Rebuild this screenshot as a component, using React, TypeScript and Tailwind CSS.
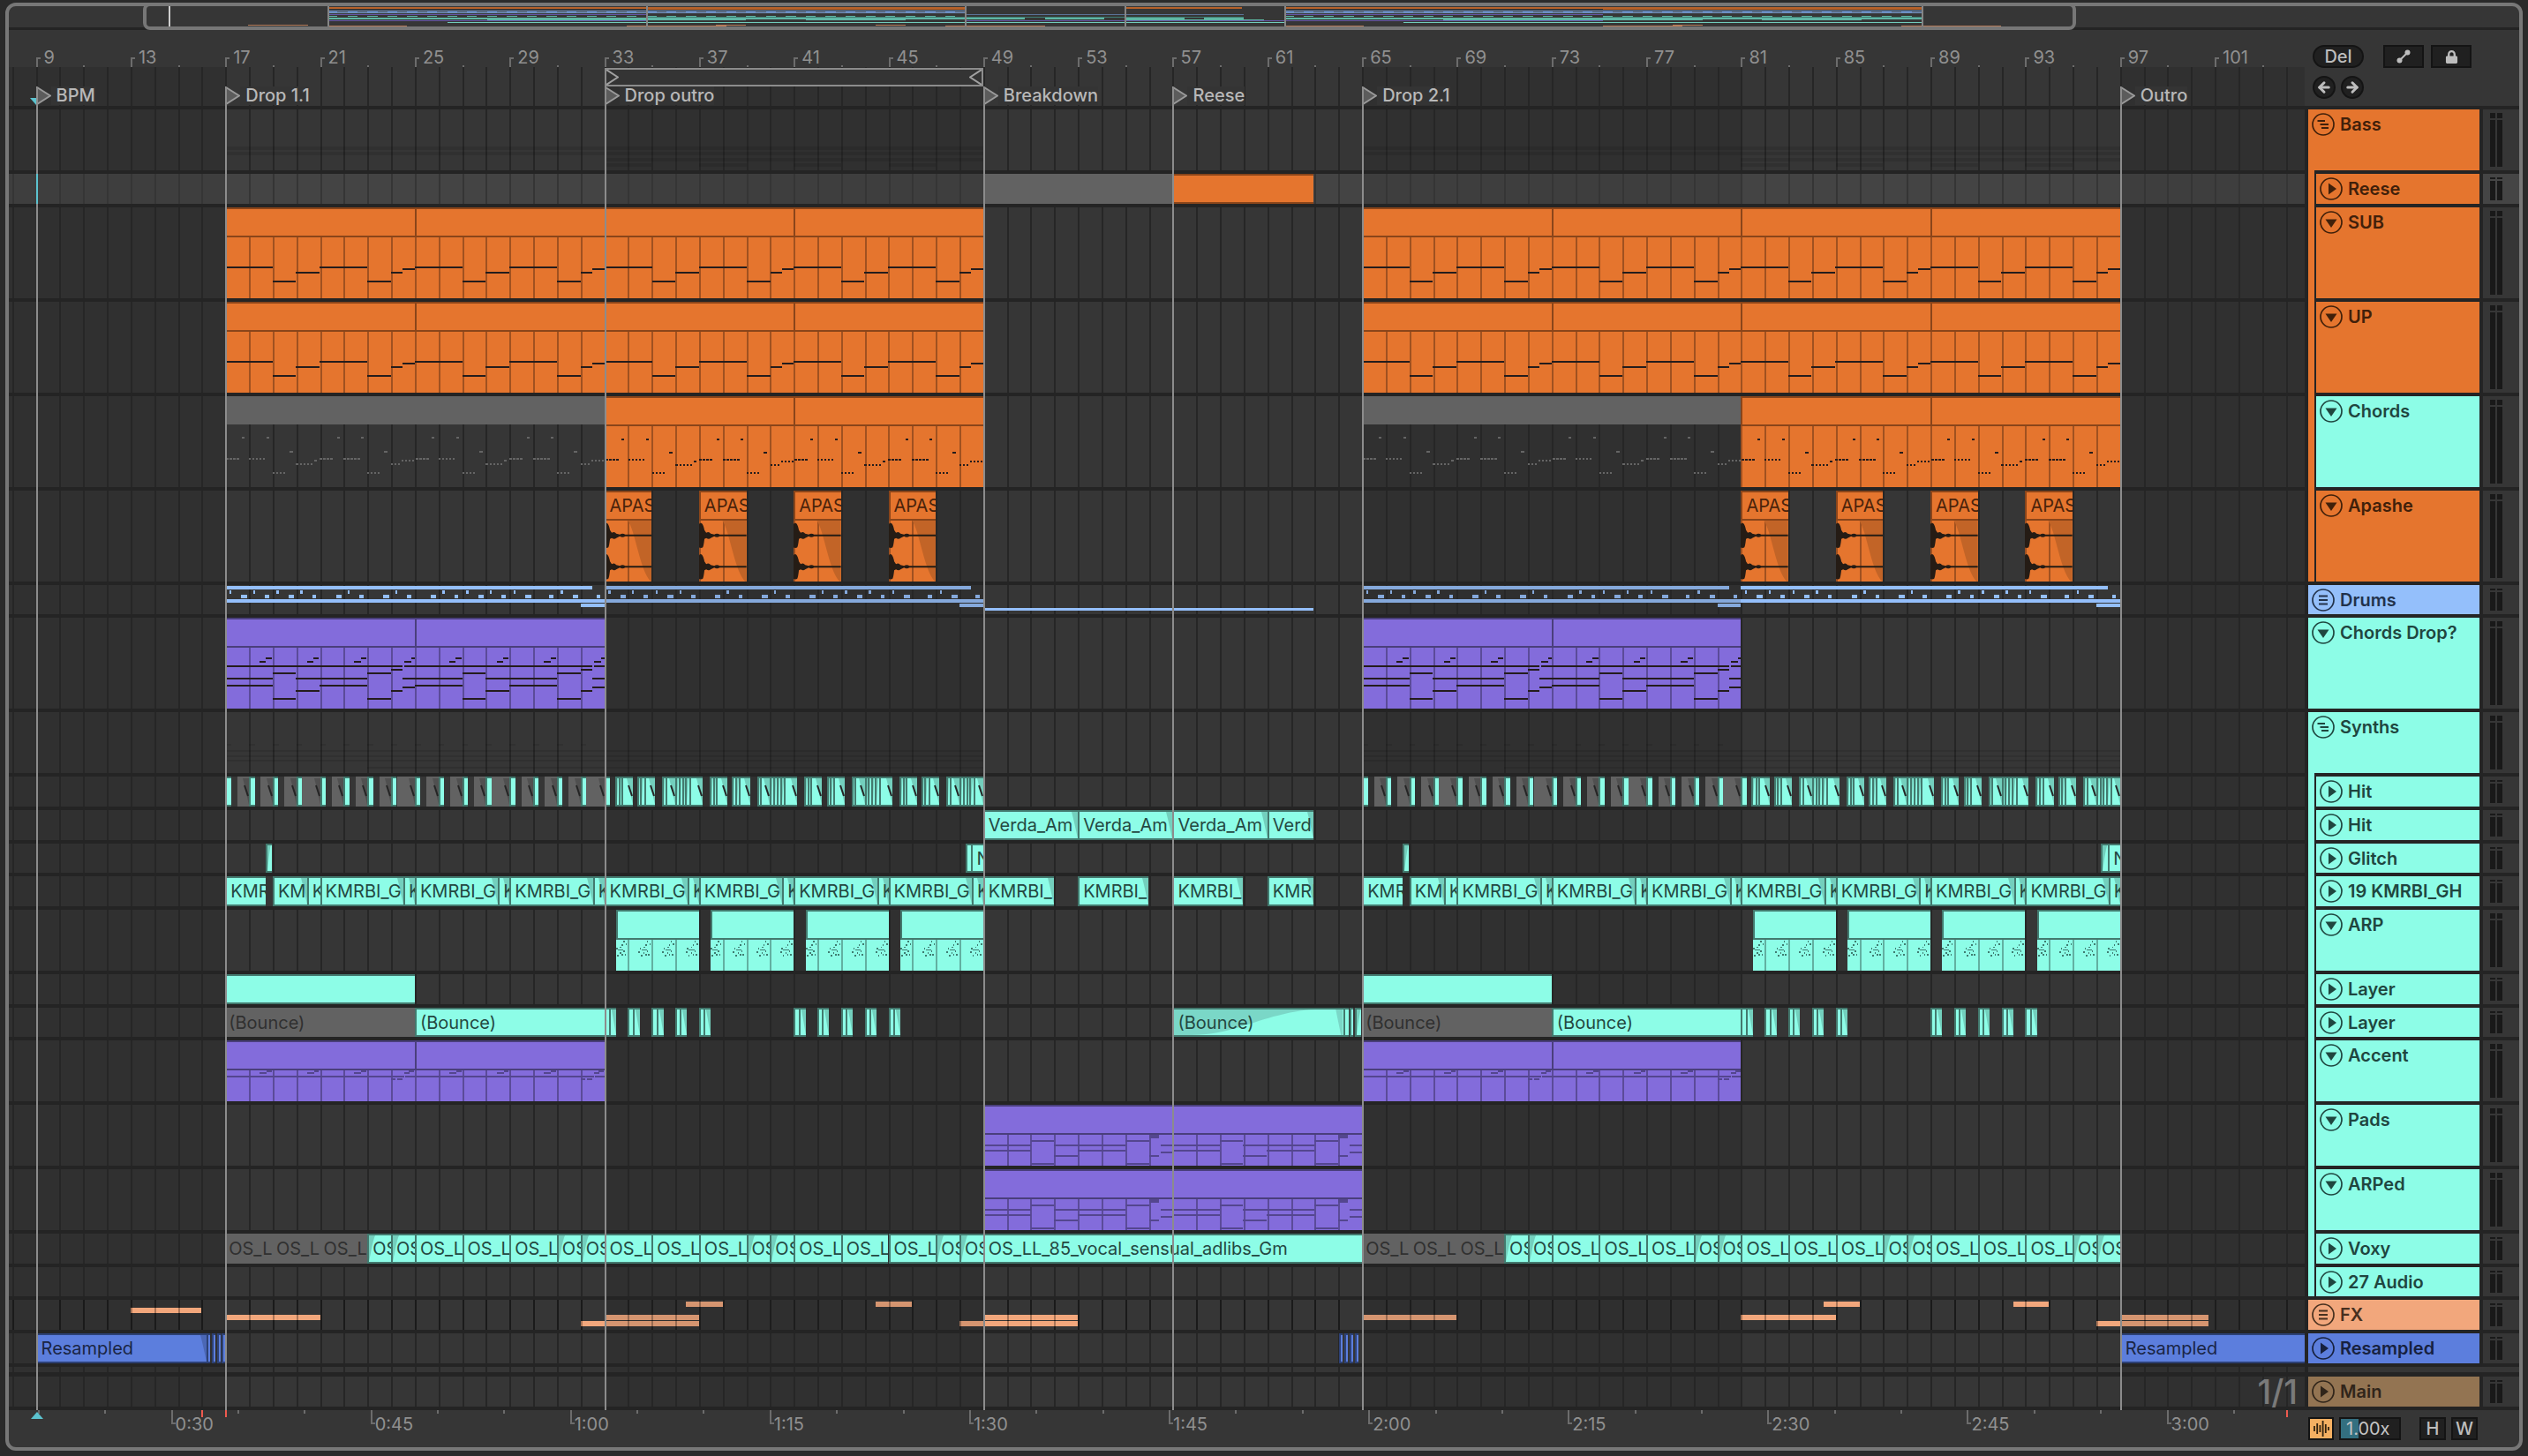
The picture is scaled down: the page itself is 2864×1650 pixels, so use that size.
import React from 'react';
import { FaLock } from 'react-icons/fa';
import { ArrowLeft, ArrowRight } from 'lucide-react';

// The visible part of the song, in bars
const FIRST_BAR = 7.86;
const BAR_SPAN = 96.94;
const LAST_BAR = FIRST_BAR + BAR_SPAN;

const pos = (bar: number) => `${((bar - FIRST_BAR) / BAR_SPAN) * 100}%`;
const len = (bars: number) => `${(bars / BAR_SPAN) * 100}%`;
const range = (n: number) => Array.from({ length: n }, (_, i) => i);

type Tone = 'orange' | 'teal' | 'purple' | 'blue' | 'gray';
// start, end, y and an optional thickness
type Note = [number, number, number, number?];
type Fade = 'in' | 'out' | 'long';

type ClipData = {
  from: number;
  to: number;
  tone: Tone;
  label?: string;
  notes?: Note[];
  ink?: string;
  wave?: boolean;
  fade?: Fade;
  tick?: boolean;
};

type Track = {
  name: string;
  size: string;
  color: string;
  text: string;
  icon: 'play' | 'down' | 'group' | 'lines';
  nested?: string;
  opens?: boolean;
  last?: boolean;
  selected?: boolean;
  small?: boolean;
  clips?: ClipData[];
  overview?: 'bass' | 'drums' | 'synths' | 'fx';
};

const tones: Record<Tone, string> = {
  orange: 'bg-[#e5752e] border-[#8a451a] text-[#4a230b]',
  teal: 'bg-[#8dfde7] border-[#43796e] text-[#244841]',
  purple: 'bg-[#836cdb] border-[#4a3f7c] text-[#241d44]',
  blue: 'bg-[#5c7edd] border-[#2d4175] text-[#1a2544]',
  gray: 'bg-[#626262] border-[#626262] text-[#303030]',
};

const S = 'h-[38px]';
const S_ODD = 'h-[37px]';
const M = 'h-[73px]';
const L = 'h-[107px]';

const subNotes: Note[] = [
  [0, 2, 35], [2, 3, 51], [3, 4, 41], [4, 6, 35], [6, 7, 51], [7, 7.5, 41], [7.5, 8, 37],
];

const dotted = (from: number, to: number, y: number): Note[] =>
  range(Math.round((to - from) / 0.15)).map((i) => [from + i * 0.15, from + i * 0.15 + 0.09, y] as Note);

const chordNotes: Note[] = [
  ...dotted(0.05, 0.7, 39), [0.7, 0.83, 15],
  ...dotted(1, 1.7, 39), [1.75, 1.85, 15],
  ...dotted(2, 2.65, 55), [2.72, 2.86, 31],
  ...dotted(3, 3.7, 45), [3.78, 3.86, 41],
  ...dotted(4, 4.65, 39), [4.72, 4.86, 15],
  ...dotted(5, 5.7, 39), [5.75, 5.85, 15],
  ...dotted(6, 6.65, 55), [6.72, 6.86, 31],
  ...dotted(7, 7.45, 45), ...dotted(7.45, 8, 41),
];

const dropNotes: Note[] = [
  [0, 7.5, 22], [7.55, 8, 22],
  [1.45, 1.73, 16], [1.73, 1.96, 12], [3.45, 3.73, 16], [3.73, 3.96, 12],
  [5.45, 5.73, 16], [5.73, 5.96, 12], [7.57, 7.85, 16], [7.85, 8, 12],
  [0, 2, 36], [3, 6, 36], [7.5, 8, 36],
  [0, 2, 44], [4, 6, 44], [7.5, 8, 46],
  [2, 3, 30], [6, 7, 30], [7, 7.5, 26],
  [3, 4, 50], [7, 7.5, 50],
  [2, 3, 60], [6, 7, 60],
];

const accentNotes: Note[] = [
  [0, 7.55, 7], [7.6, 8, 7],
  [1.45, 1.75, 3], [1.75, 1.96, 1], [3.45, 3.75, 3], [3.75, 3.96, 1],
  [5.45, 5.75, 3], [5.75, 5.96, 1], [7.57, 7.8, 3], [7.75, 7.96, 1], [7, 7.2, 11], [7.25, 7.5, 11],
];

const padNotes: Note[] = [
  [0, 2, 13], [3, 6, 13], [7.5, 8, 13],
  [0, 2, 19], [4, 6, 19], [7.5, 8, 21],
  [2, 3, 7], [6, 7, 7], [7, 7.4, 1, 4],
  [3, 4, 25], [7, 7.4, 25],
  [2, 3, 35], [6, 7, 35],
];

const arpNotes: Note[] = range(4).flatMap((b) => {
  const x = b - 0.1;
  return [
    [x + 0.4, x + 0.46, 2], [x + 0.33, x + 0.39, 6], [x + 0.26, x + 0.32, 9],
    [x + 0.1, x + 0.16, 11], [x + 0.5, x + 0.56, 5], [x + 0.17, x + 0.4, 13, 1],
    [x + 0.05, x + 0.11, 15], [x + 0.25, x + 0.31, 16], [x + 0.4, x + 0.46, 14],
    [x + 0.15, x + 0.21, 19], [x + 0.33, x + 0.39, 18], [x + 0.46, x + 0.52, 18],
  ] as Note[];
});

const every8 = (start: number, count: number, tone: Tone, notes: Note[], ink?: string): ClipData[] =>
  range(count).map((i) => ({ from: start + i * 8, to: start + i * 8 + 8, tone, notes, ink }));

const apashe = [33, 37, 41, 45, 81, 85, 89, 93].map((b): ClipData => ({
  from: b, to: b + 2, tone: 'orange', label: 'APAS', wave: true,
}));

const hits = [17, 65].flatMap((s): ClipData[] => [
  ...range(16).map((i): ClipData => ({
    from: s + i + ((i + 1) % 4 === 0 ? 0.25 : 0.5), to: s + i + 1, tone: 'gray', fade: 'out', tick: true,
  })),
  ...range(17).map((i): ClipData => ({ from: s + i, to: s + i + 0.24, tone: 'teal' })),
  ...range(4).flatMap((i) =>
    [
      [0.45, 0.6], [0.6, 0.72], [0.72, 1.2], [1.4, 1.52], [1.52, 1.68], [1.68, 2.15],
      [2.45, 2.58], [2.58, 3.0], [3.0, 3.14], [3.14, 3.28], [3.28, 3.42], [3.42, 3.6], [3.6, 4.15],
    ].map(([a, b]): ClipData => ({
      from: s + 16 + i * 4 + a,
      to: Math.min(s + 16 + i * 4 + b, s + 32),
      tone: 'teal',
      fade: b - a > 0.3 ? 'out' : 'in',
      tick: b - a > 0.3,
    })),
  ),
]);

const verda = [49, 53, 57, 61].map((b): ClipData => ({
  from: b, to: b === 61 ? 62.95 : b + 4, tone: 'teal', label: b === 61 ? 'Verd' : 'Verda_Am', fade: 'out',
}));

const glitch: ClipData[] = [
  { from: 18.72, to: 18.95, tone: 'teal', fade: 'in' },
  { from: 48.25, to: 48.5, tone: 'teal' },
  { from: 48.5, to: 49, tone: 'teal', label: 'N' },
  { from: 66.7, to: 66.97, tone: 'teal', fade: 'in' },
  { from: 96.2, to: 96.5, tone: 'teal', fade: 'in' },
  { from: 96.5, to: 97, tone: 'teal', label: 'N' },
];

const kmrbi: ClipData[] = [
  ...[17, 65].flatMap((s): ClipData[] => [
    { from: s, to: s + 1.7, tone: 'teal', label: 'KMR' },
    { from: s + 2, to: s + 3.45, tone: 'teal', label: 'KMI', fade: 'out' },
    { from: s + 3.45, to: s + 4, tone: 'teal', label: 'K' },
    ...range(7).flatMap((i): ClipData[] => [
      { from: s + 4 + i * 4, to: s + 7.52 + i * 4, tone: 'teal', label: 'KMRBI_G', fade: 'out' },
      { from: s + 7.52 + i * 4, to: s + 8 + i * 4, tone: 'teal', label: 'K', fade: 'out' },
    ]),
  ]),
  ...[49, 53, 57, 61].map((b): ClipData => ({
    from: b, to: b === 61 ? 62.95 : b + 2.97, tone: 'teal', label: b === 61 ? 'KMRI' : 'KMRBI_', fade: 'out',
  })),
];

const arp = [33, 37, 41, 45, 81, 85, 89, 93].map((b): ClipData => ({
  from: b + 0.5, to: b + 4, tone: 'teal', notes: arpNotes, ink: '#3f7d71',
}));

const bounce: ClipData[] = [
  ...[17, 65].flatMap((s): ClipData[] => [
    { from: s, to: s + 8, tone: 'gray', label: '(Bounce)' },
    { from: s + 8, to: s + 16, tone: 'teal', label: '(Bounce)' },
    ...[16, 17, 18, 19, 20, 24, 25, 26, 27, 28].flatMap((i): ClipData[] => [
      { from: s + i, to: s + i + 0.2, tone: 'teal' },
      { from: s + i + 0.2, to: s + i + 0.5, tone: 'teal', fade: 'out' },
    ]),
  ]),
  { from: 57, to: 64.2, tone: 'teal', label: '(Bounce)', fade: 'long' },
  { from: 64.2, to: 64.42, tone: 'teal' },
  { from: 64.46, to: 64.62, tone: 'teal' },
  { from: 64.68, to: 64.95, tone: 'teal', fade: 'in' },
];

const voxy: ClipData[] = [17, 65].flatMap((s): ClipData[] => [
  ...[0, 2, 4].map((i): ClipData => ({ from: s + i, to: s + i + 2, tone: 'gray', label: 'OS_L' })),
  { from: s + 6, to: s + 7, tone: 'teal', label: 'OS', fade: 'in' },
  { from: s + 7, to: s + 8, tone: 'teal', label: 'OS', fade: 'in' },
  ...[8, 16, 24].flatMap((b) =>
    [[0, 2], [2, 4], [4, 6], [6, 7], [7, 8]].map(([a, z]): ClipData => ({
      from: s + b + a, to: s + b + z, tone: 'teal', label: z - a === 1 ? 'OS' : 'OS_L', fade: z - a === 1 ? 'in' : undefined,
    })),
  ),
]);

const slivers = (from: number): ClipData[] =>
  range(4).map((i) => ({ from: from + i * 0.22, to: from + i * 0.22 + 0.17, tone: 'blue' }));

const ORANGE = 'bg-[#e5752e]';
const TEAL = 'bg-[#8dfde7]';
const onOrange = 'text-[#40200a]';
const onTeal = 'text-[#1f463f]';

const tracks: Track[] = [
  { name: 'Bass', size: M, color: ORANGE, text: onOrange, icon: 'group', opens: true, overview: 'bass' },
  {
    name: 'Reese', size: S, color: ORANGE, text: onOrange, icon: 'play', nested: ORANGE, selected: true, small: true,
    clips: [{ from: 49, to: 57, tone: 'gray' }, { from: 57, to: 62.95, tone: 'orange' }],
  },
  {
    name: 'SUB', size: L, color: ORANGE, text: onOrange, icon: 'down', nested: ORANGE,
    clips: [...every8(17, 4, 'orange', subNotes), ...every8(65, 4, 'orange', subNotes)],
  },
  {
    name: 'UP', size: L, color: ORANGE, text: onOrange, icon: 'down', nested: ORANGE,
    clips: [...every8(17, 4, 'orange', subNotes), ...every8(65, 4, 'orange', subNotes)],
  },
  {
    name: 'Chords', size: L, color: TEAL, text: onTeal, icon: 'down', nested: ORANGE,
    clips: [
      ...every8(17, 2, 'gray', chordNotes, '#656565'), ...every8(33, 2, 'orange', chordNotes),
      ...every8(65, 2, 'gray', chordNotes, '#656565'), ...every8(81, 2, 'orange', chordNotes),
    ],
  },
  { name: 'Apashe', size: L, color: ORANGE, text: onOrange, icon: 'down', nested: ORANGE, last: true, clips: apashe },
  { name: 'Drums', size: S_ODD, color: 'bg-[#94bffb]', text: 'text-[#22324b]', icon: 'lines', small: true, overview: 'drums' },
  {
    name: 'Chords Drop?', size: L, color: TEAL, text: onTeal, icon: 'down',
    clips: [...every8(17, 2, 'purple', dropNotes), ...every8(65, 2, 'purple', dropNotes)],
  },
  { name: 'Synths', size: M, color: TEAL, text: onTeal, icon: 'group', opens: true, overview: 'synths' },
  { name: 'Hit', size: S, color: TEAL, text: onTeal, icon: 'play', nested: TEAL, small: true, clips: hits },
  { name: 'Hit', size: S, color: TEAL, text: onTeal, icon: 'play', nested: TEAL, small: true, clips: verda },
  { name: 'Glitch', size: S_ODD, color: TEAL, text: onTeal, icon: 'play', nested: TEAL, small: true, clips: glitch },
  { name: '19 KMRBI_GH', size: S, color: TEAL, text: onTeal, icon: 'play', nested: TEAL, small: true, clips: kmrbi },
  { name: 'ARP', size: M, color: TEAL, text: onTeal, icon: 'down', nested: TEAL, clips: arp },
  {
    name: 'Layer', size: S, color: TEAL, text: onTeal, icon: 'play', nested: TEAL, small: true,
    clips: [{ from: 17, to: 25, tone: 'teal' }, { from: 65, to: 73, tone: 'teal' }],
  },
  { name: 'Layer', size: S_ODD, color: TEAL, text: onTeal, icon: 'play', nested: TEAL, small: true, clips: bounce },
  {
    name: 'Accent', size: M, color: TEAL, text: onTeal, icon: 'down', nested: TEAL,
    clips: [...every8(17, 2, 'purple', accentNotes, '#54468f'), ...every8(65, 2, 'purple', accentNotes, '#54468f')],
  },
  { name: 'Pads', size: M, color: TEAL, text: onTeal, icon: 'down', nested: TEAL, clips: every8(49, 2, 'purple', padNotes, '#54468f') },
  { name: 'ARPed', size: M, color: TEAL, text: onTeal, icon: 'down', nested: TEAL, clips: every8(49, 2, 'purple', padNotes, '#54468f') },
  {
    name: 'Voxy', size: S, color: TEAL, text: onTeal, icon: 'play', nested: TEAL, small: true,
    clips: [...voxy, { from: 49, to: 65, tone: 'teal', label: 'OS_LL_85_vocal_sensual_adlibs_Gm' }],
  },
  { name: '27 Audio', size: S_ODD, color: TEAL, text: onTeal, icon: 'play', nested: TEAL, last: true, small: true },
  { name: 'FX', size: S, color: 'bg-[#f2a77c]', text: 'text-[#47301f]', icon: 'lines', small: true, overview: 'fx' },
  {
    name: 'Resampled', size: S, color: 'bg-[#5c7edd]', text: 'text-[#17213f]', icon: 'play', small: true,
    clips: [
      { from: 9, to: 16.2, tone: 'blue', label: 'Resampled', fade: 'out' },
      ...slivers(16.2), ...slivers(64.02),
      { from: 97, to: LAST_BAR, tone: 'blue', label: 'Resampled' },
    ],
  },
];

const mainTrack: Track = {
  name: 'Main', size: S, color: 'bg-[#937452]', text: 'text-[#30251a]', icon: 'play', small: true,
};

const locators = [
  { bar: 9, name: 'BPM' },
  { bar: 17, name: 'Drop 1.1' },
  { bar: 33, name: 'Drop outro' },
  { bar: 49, name: 'Breakdown' },
  { bar: 57, name: 'Reese' },
  { bar: 65, name: 'Drop 2.1' },
  { bar: 97, name: 'Outro' },
];

// Rectangles on a bar/pixel plane that stretches over its parent
const Plane: React.FC<{ notes: Note[]; from?: number; bars: number; height: number; ink: string; opacity?: number }> = ({
  notes, from = 0, bars, height, ink, opacity,
}) => (
  <svg
    className="absolute inset-0 w-full h-full"
    viewBox={`${from} 0 ${bars} ${height}`}
    preserveAspectRatio="none"
    shapeRendering="crispEdges"
  >
    {notes.map(([a, b, y, h], i) => (
      <rect key={i} x={a} y={y - 1} width={b - a} height={h ?? 2} fill={ink} fillOpacity={opacity} />
    ))}
  </svg>
);

const Waveform: React.FC = () => (
  <svg className="absolute inset-0 w-full h-full" viewBox="0 0 53 70" preserveAspectRatio="none">
    <path d="M26 0C34 10 40 60 52 70H53V0Z" fill="#c26427" />
    {[17, 53].map((y) => (
      <g key={y} transform={`translate(0 ${y})`} fill="#251c15">
        <path d="M0-13Q1-15 3-14Q5-12 6-6L8-3Q11-5 13-2L17-1Q20-3 23-1H53V1H23Q20 3 17 1L13 3Q11 5 8 3L6 4Q5 13 4 14Q2 15 0 14Z" />
      </g>
    ))}
  </svg>
);

const FadeShape: React.FC<{ kind: Fade }> = ({ kind }) => {
  if (kind === 'long') {
    return (
      <svg className="absolute inset-0 w-full h-full" viewBox="0 0 194 34" preserveAspectRatio="none">
        <path d="M0 34H20C60 34 90 16 120 8C140 2 150 0 170 0H0ZM186 0H194V34H192Z" fill="#7ad7c7" />
      </svg>
    );
  }
  return (
    <svg
      className={`absolute inset-y-0 h-full w-2 max-w-full ${kind === 'in' ? 'left-0' : 'right-0'}`}
      viewBox="0 0 8 34"
      preserveAspectRatio="none"
    >
      <path d={kind === 'in' ? 'M0 0H7C4 8 2 24 0 34Z' : 'M1 0H8V34C6 24 3 8 1 0Z'} fill="#000" fillOpacity="0.18" />
    </svg>
  );
};

const Tick: React.FC = () => (
  <svg className="absolute inset-y-0 right-0 h-full w-[6px]" viewBox="0 0 6 30" preserveAspectRatio="none">
    <path d="M1 8L5 20" stroke="#242424" strokeWidth="2" fill="none" />
  </svg>
);

const Clip: React.FC<{ clip: ClipData; small?: boolean; size: string }> = ({ clip, small, size }) => {
  const { from, to, tone, label, notes, wave, fade, tick } = clip;
  const bars = to - from;
  const muted = tone === 'gray';
  const box = { left: pos(from), width: len(bars) };
  const bodyHeight = size === L ? 71 : 37;

  if (small) {
    return (
      <div
        className={`absolute inset-y-0 overflow-hidden border-y-2 ${muted ? '' : 'border-l-2'} ${tones[tone]}`}
        style={box}
      >
        {fade && <FadeShape kind={fade} />}
        {tick && <Tick />}
        {label && <span className="relative block pl-1 text-[20px] leading-[30px] whitespace-nowrap">{label}</span>}
      </div>
    );
  }

  return (
    <div className="absolute inset-y-0 flex flex-col overflow-hidden" style={box}>
      <div className={`h-8 shrink-0 overflow-hidden border-t-2 ${muted ? '' : 'border-l-2'} ${tones[tone]}`}>
        {label && <span className="block pl-1 text-[20px] leading-[30px] whitespace-nowrap">{label}</span>}
      </div>
      <div className={`relative flex-1 ${muted ? '' : `border-t-2 ${tones[tone]}`}`}>
        {!muted &&
          range(Math.ceil(bars)).map((i) => {
            const offset = Math.ceil(from) - from + i;
            return (
              <div
                key={i}
                className="absolute inset-y-0 w-[2px] bg-black/30"
                style={{ left: `${(offset / bars) * 100}%` }}
              />
            );
          })}
        {notes && <Plane notes={notes} bars={bars} height={bodyHeight} ink={clip.ink ?? '#241c1c'} />}
        {wave && <Waveform />}
      </div>
    </div>
  );
};

const Bar: React.FC<{ from: number; to: number; className: string }> = ({ from, to, className }) => (
  <div className={`absolute inset-y-0 ${className}`} style={{ left: pos(from), width: len(to - from) }} />
);

const BarLines: React.FC<{ className: string }> = ({ className }) => (
  <>
    {range(97).map((i) => (
      <div key={i} className={`absolute inset-y-0 w-[2px] ${className}`} style={{ left: pos(8 + i) }} />
    ))}
  </>
);

const drumNotes: Note[] = [
  ...[17, 33, 65, 81].flatMap((s): Note[] => [
    [s, s + 15.5, 2, 4],
    [s, s + 16, 17, 4],
    [s + 15, s + 16, 22, 4],
    ...[0, 1, 2, 3, 5, 7, 9, 10, 11, 12, 14].map((g): Note => [s + g + 0.17, s + g + 0.26, 7, 4]),
    ...range(16).map((d): Note => [s + d + 0.67, s + d + (d % 2 ? 0.84 : 0.91), 12, 4]),
  ]),
  [49, 62.95, 27, 3],
];

const fxNotes: Note[] = [
  [13, 16, 10, 6], [17, 21, 18, 6], [32, 37, 25, 6], [33, 37, 18, 6], [36.45, 38, 3, 6], [44.45, 46, 3, 6],
  [48, 53, 25, 6], [49, 53, 18, 6], [65, 69, 18, 6], [81, 85, 18, 6], [84.5, 86, 3, 6], [92.5, 94, 3, 6],
  [96, 100.75, 25, 6], [97, 100.75, 18, 6],
];

const bassNotes: Note[] = [17, 65].flatMap((s): Note[] => [
  [s, s + 32, 43, 4], [s, s + 32, 49, 4], [s + 16, s + 32, 56, 4],
  ...[16, 20, 24, 28].map((i): Note => [s + i, s + i + 2, 62, 4]),
]);

const synthNotes: Note[] = [17, 65].flatMap((s): Note[] => [
  [s, s + 32, 44, 2], [s, s + 32, 50, 2], [s, s + 32, 55, 2], [s + 6, s + 32, 63, 2],
  ...range(16).map((i): Note => [s + i, s + i + 0.25, 37, 2]),
]);

const GroupOverview: React.FC<{ kind: NonNullable<Track['overview']> }> = ({ kind }) => {
  const plane = { from: FIRST_BAR, bars: BAR_SPAN };
  if (kind === 'bass') return <Plane {...plane} notes={bassNotes} height={69} ink="#000" opacity={0.1} />;
  if (kind === 'synths') return <Plane {...plane} notes={synthNotes} height={69} ink="#000" opacity={0.1} />;
  return (
    <>
      {kind === 'drums' ? (
        <Plane {...plane} notes={drumNotes} height={33} ink="#94bffb" />
      ) : (
        <Plane {...plane} notes={fxNotes} height={34} ink="#f2a77c" />
      )}
      {kind === 'fx' && <BarLines className="bg-black/30" />}
      <Bar from={33} to={49} className="bg-[#303030]/15" />
      <Bar from={65} to={81} className="bg-[#303030]/15" />
      <Bar from={97} to={LAST_BAR} className="bg-[#303030]/15" />
    </>
  );
};

const Lane: React.FC<{ track: Track }> = ({ track }) => (
  <div className={`${track.size} border-b-4 border-[#242424]`}>
    <div className={`relative h-full overflow-hidden ${track.selected ? 'bg-white/7' : ''}`}>
      {track.overview && <GroupOverview kind={track.overview} />}
      {track.clips?.map((clip, i) => (
        <Clip key={i} clip={clip} small={track.small} size={track.size} />
      ))}
    </div>
  </div>
);

const iconPaths: Record<Track['icon'], React.ReactNode> = {
  play: <path d="M10 6.500L19 13L10 19.500Z" fill="currentColor" />,
  down: <path d="M6.500 9.500H19.500L13 19Z" fill="currentColor" />,
  group: <path d="M6.500 9H15M9.500 13H19M11 17H19" stroke="currentColor" strokeWidth="2" />,
  lines: <path d="M8 8.500H18M8 13H18M8 17.500H18" stroke="currentColor" strokeWidth="2" />,
};

const TrackHeader: React.FC<{ track: Track }> = ({ track }) => (
  <div className={`flex ${track.size}`}>
    <div className="flex w-[194px]">
      {track.nested && <div className={`mr-[2px] w-[7px] ${track.nested} ${track.last ? 'mb-1' : ''}`} />}
      {track.opens && <div className={`w-[7px] ${track.color}`} />}
      <div className={`mb-1 flex min-w-0 flex-1 items-start pt-1 ${track.opens ? '-ml-[3px]' : 'pl-1'} ${track.color} ${track.text}`}>
        <button aria-label={`Fold ${track.name}`} className="shrink-0">
          <svg className="block h-[26px] w-[26px]" viewBox="0 0 26 26" fill="none">
            <circle cx="13" cy="13" r="12" stroke="currentColor" strokeWidth="1.700" />
            {iconPaths[track.icon]}
          </svg>
        </button>
        <span className="pl-[6px] text-[20px] leading-[26px] font-semibold whitespace-nowrap">{track.name}</span>
      </div>
    </div>
    <div className={`mb-1 ml-1 flex flex-1 gap-[2px] pl-2 ${track.selected ? 'bg-[#454545]' : 'bg-[#363636]'}`}>
      {[0, 1].map((i) => (
        <div key={i} className="flex w-[6px] flex-col gap-[2px] py-1">
          <div className={`bg-[#191919] ${track.small ? 'h-[2px]' : 'h-[6px]'}`} />
          <div className="flex-1 bg-[#191919]" />
        </div>
      ))}
    </div>
  </div>
);

const GridLines: React.FC = () => (
  <div className="absolute inset-0 overflow-hidden bg-[#363636]">
    <Bar from={FIRST_BAR} to={17} className="bg-[#303030]" />
    <Bar from={33} to={49} className="bg-[#303030]" />
    <Bar from={65} to={81} className="bg-[#303030]" />
    <Bar from={97} to={LAST_BAR} className="bg-[#303030]" />
    <BarLines className="bg-[#262626]" />
  </div>
);

// Overview strip: x in bars from 1, y in pixels
const Minimap: React.FC = () => {
  const row = (y: number, h: number, fill: string, spans: number[][]) =>
    spans.map(([a, b], i) => <rect key={`${y}-${i}`} x={a - 1} y={y} width={b - a} height={h} fill={fill} />);
  const dashes = range(32).flatMap((i) => [[17 + i, 17.5 + i], [65 + i, 65.5 + i]]);
  return (
    <div className="relative h-[27px] border-b-[3px] border-[#242424]">
      <svg className="w-full h-full" viewBox="0 0 126 24" preserveAspectRatio="none" shapeRendering="crispEdges">
        {row(1, 2, '#b5612a', [[17, 49], [57, 62.9], [65, 97]])}
        {row(3, 1, '#b5612a', [[33, 49], [81, 97]])}
        {row(5, 1, '#7ea4da', [[17, 49], [65, 97]])}
        {row(6, 1, '#4b6794', dashes)}
        {row(7, 1, '#7ea4da', [[17, 49], [65, 97]])}
        {row(9, 1, '#6455a5', [[17, 33], [65, 81]])}
        {row(9, 1, '#5a7397', [[49, 63]])}
        {row(11, 1, '#5fb5a5', dashes)}
        {row(12, 1, '#3f7d71', [[33, 63], [81, 97]])}
        {row(13, 2, '#5fb5a5', [[17, 52], [53, 56], [57, 60], [61, 63], [65, 97]])}
        {row(15, 1, '#5fb5a5', [[25, 38], [41, 46], [57, 64], [73, 86], [89, 94]])}
        {row(16, 1, '#6455a5', [[17, 33], [49, 65], [65, 81]])}
        {row(18, 1, '#71cdbc', [[23, 65], [71, 97]])}
        {row(21, 1, '#b57c5a', [[13, 16], [36.5, 38], [44.5, 46], [84.5, 86]])}
        {row(22, 1, '#b57c5a', [[17, 21], [32, 37], [48, 53], [65, 69], [81, 85], [96, 101]])}
        {row(23, 1, '#4a66b5', [[9, 17], [64, 65], [97, 97.5]])}
        {[9, 17, 33, 49, 57, 65, 97].map((b) => (
          <rect key={b} x={b - 1} y="0" width="0.09" height="24" fill={b === 9 ? '#cfcfcf' : '#858585'} />
        ))}
      </svg>
      <div className="absolute -top-1 -bottom-[3px] left-[5.350%] w-[77%] rounded-lg border-4 border-[#777777]" />
    </div>
  );
};

const BeatRuler: React.FC = () => (
  <div className="relative h-[42px] overflow-hidden">
    {range(24).map((i) => {
      const bar = 9 + i * 4;
      return (
        <React.Fragment key={bar}>
          <div className="absolute inset-y-0 flex items-end" style={{ left: pos(bar) }}>
            <div className="h-[11px] w-[5px] border-t-2 border-l-2 border-[#6c6c6c]" />
            <span className="pl-1 text-[20px] leading-[22px] text-[#909090]">{bar}</span>
          </div>
          <div className="absolute bottom-0 h-[2px] w-[2px] bg-[#6c6c6c]" style={{ left: pos(bar + 2) }} />
        </React.Fragment>
      );
    })}
  </div>
);

const LocatorStrip: React.FC = () => (
  <div className="relative h-12 border-b-4 border-[#242424]">
    <div
      className="absolute top-px flex h-[21px] items-stretch justify-between border-2 border-[#8c8c8c] bg-[#343434]"
      style={{ left: pos(33), width: len(16) }}
    >
      <svg className="h-full w-[14px]" viewBox="0 0 14 17" fill="none" stroke="#a0a0a0" strokeWidth="2">
        <path d="M0 0L13 8.500L0 17" />
      </svg>
      <svg className="h-full w-[14px]" viewBox="0 0 14 17" fill="none" stroke="#a0a0a0" strokeWidth="2">
        <path d="M14 0L1 8.500L14 17" />
      </svg>
    </div>
    {locators.map((l) => (
      <div key={l.bar} className="absolute bottom-px flex h-[21px] items-center" style={{ left: pos(l.bar) }}>
        <svg className="h-[21px] w-[17px]" viewBox="0 0 17 21">
          <path d="M1 1L16 10.500L1 20Z" fill="#5c5c5c" stroke="#9a9a9a" strokeWidth="2" />
        </svg>
        <span className="bg-[#343434] pl-[6px] text-[20px] leading-[21px] font-medium whitespace-nowrap text-[#b8b8b8]">
          {l.name}
        </span>
      </div>
    ))}
    <svg className="absolute bottom-px -ml-[7px] h-2 w-[7px]" style={{ left: pos(9) }} viewBox="0 0 7 8">
      <path d="M0 0H7V8Z" fill="#5cc3cf" />
    </svg>
  </div>
);

const TimeRuler: React.FC = () => {
  const barAt = (s: number) => 14.7 + (s - 30) / 1.78;
  return (
    <div className="relative h-[42px] overflow-hidden">
      {range(34).map((i) => {
        const s = 20 + i * 5;
        if (s % 15 !== 0) {
          return <div key={s} className="absolute top-0 h-1 w-[2px] bg-[#6c6c6c]" style={{ left: pos(barAt(s)) }} />;
        }
        return (
          <div key={s} className="absolute top-0 flex" style={{ left: pos(barAt(s)) }}>
            <div className="h-4 w-[5px] border-b-2 border-l-2 border-[#6c6c6c]" />
            <span className="pt-1 text-[20px] leading-6 text-[#909090]">
              {`${Math.floor(s / 60)}:${String(s % 60).padStart(2, '0')}`}
            </span>
          </div>
        );
      })}
      {[16, 17, 104].map((b) => (
        <div key={b} className="absolute top-0 h-2 w-[2px] bg-[#ee5a4f]" style={{ left: pos(b) }} />
      ))}
      <svg className="absolute top-[2px] -ml-[6px] h-2 w-[14px]" style={{ left: pos(9) }} viewBox="0 0 14 8">
        <path d="M7 0L14 8H0Z" fill="#5cc3cf" />
      </svg>
    </div>
  );
};

const Arrangement: React.FC = () => (
  <div className="min-w-0 flex-1">
    <BeatRuler />
    <div className="relative">
      <GridLines />
      <div className="relative">
        <LocatorStrip />
        {tracks.map((track, i) => (
          <Lane key={i} track={track} />
        ))}
        <div className="h-[11px] border-b-[5px] border-[#242424]" />
        <div className="flex h-[38px] items-center justify-end border-b-4 border-[#242424] pr-2">
          <span className="text-[38px] leading-[34px] font-medium text-[#7a7a7a]">1/1</span>
        </div>
      </div>
      <div className="absolute inset-0 flex flex-col pt-[23px]">
        <div className="relative flex-1">
          {locators.map((l) => (
            <div key={l.bar} className="absolute inset-y-0 w-[2px] bg-[#8c8c8c]" style={{ left: pos(l.bar) }} />
          ))}
          {/* insert mark on the selected track */}
          <div className="absolute top-[98px] h-[34px] w-[2px] bg-[#5cc3cf]" style={{ left: pos(9) }} />
        </div>
      </div>
    </div>
    <TimeRuler />
  </div>
);

const roundButton = 'flex h-[26px] items-center justify-center rounded-full border-2 border-[#141414] bg-[#202020] text-[#bdbdbd]';
const squareButton = 'flex h-[26px] items-center justify-center border-2 border-[#141414] bg-[#202020] text-[#bdbdbd]';

const SidePanel: React.FC = () => (
  <div className="w-[243px] shrink-0">
    <div className="flex h-[86px] flex-col gap-[9px] pt-[17px] pl-[9px]">
      <div className="flex">
        <button className={`${roundButton} w-[58px] text-[20px] font-medium`}>Del</button>
        <button aria-label="Automation mode" className={`${squareButton} ml-[22px] w-[46px]`}>
          <svg className="h-4 w-4" viewBox="0 0 16 16" fill="currentColor">
            <path d="M3.500 12.500L12.500 3.500" stroke="currentColor" strokeWidth="2" />
            <circle cx="3.500" cy="12.500" r="3" />
            <circle cx="12.500" cy="3.500" r="3" />
          </svg>
        </button>
        <button aria-label="Lock envelopes" className={`${squareButton} ml-2 w-[46px]`}>
          <FaLock className="h-[15px] w-[15px]" />
        </button>
      </div>
      <div className="flex gap-[6px]">
        <button aria-label="Previous locator" className={`${roundButton} w-[26px]`}>
          <ArrowLeft size={18} strokeWidth={4} />
        </button>
        <button aria-label="Next locator" className={`${roundButton} w-[26px]`}>
          <ArrowRight size={18} strokeWidth={4} />
        </button>
      </div>
    </div>
    <div className="border-t-4 border-[#242424] bg-[#242424] pl-1">
      {tracks.map((track, i) => (
        <TrackHeader key={i} track={track} />
      ))}
      <div className="mb-[5px] h-[6px] bg-[#363636]" />
      <TrackHeader track={mainTrack} />
    </div>
    <div className="flex h-[42px] items-start pt-2 pl-1">
      <button
        aria-label="Optimize waveform height"
        className="flex h-[26px] w-[29px] items-center justify-center border-2 border-[#141414] bg-[#f5b062]"
      >
        <svg className="h-5 w-5" viewBox="0 0 20 20" stroke="#33230f" strokeWidth="1.800">
          <path d="M2 7V13M5.200 4V16M8.400 6V14M11.600 1V19M14.800 5V15M18 8V12" />
        </svg>
      </button>
      <input
        aria-label="Playback speed"
        defaultValue="1.00x"
        className="ml-[6px] h-[26px] w-[70px] border-2 border-[#141414] bg-[linear-gradient(to_right,#336f80_20px,#202020_20px)] pl-[6px] text-[20px] text-[#c4c4c4]"
      />
      <button className={`${squareButton} ml-[21px] w-[30px] text-[20px] font-medium`}>H</button>
      <button className={`${squareButton} ml-[6px] w-[30px] text-[20px] font-medium`}>W</button>
    </div>
  </div>
);

const App: React.FC = () => {
  return (
    <main className="min-h-screen bg-[#2a2a2a] px-[6px] pt-[3px] pb-[5px] font-['Inter',sans-serif]">
      <div className="overflow-hidden rounded-xl border-4 border-[#777777] bg-[#363636]">
        <Minimap />
        <div className="flex">
          <Arrangement />
          <SidePanel />
        </div>
      </div>
    </main>
  );
};

export default App;
